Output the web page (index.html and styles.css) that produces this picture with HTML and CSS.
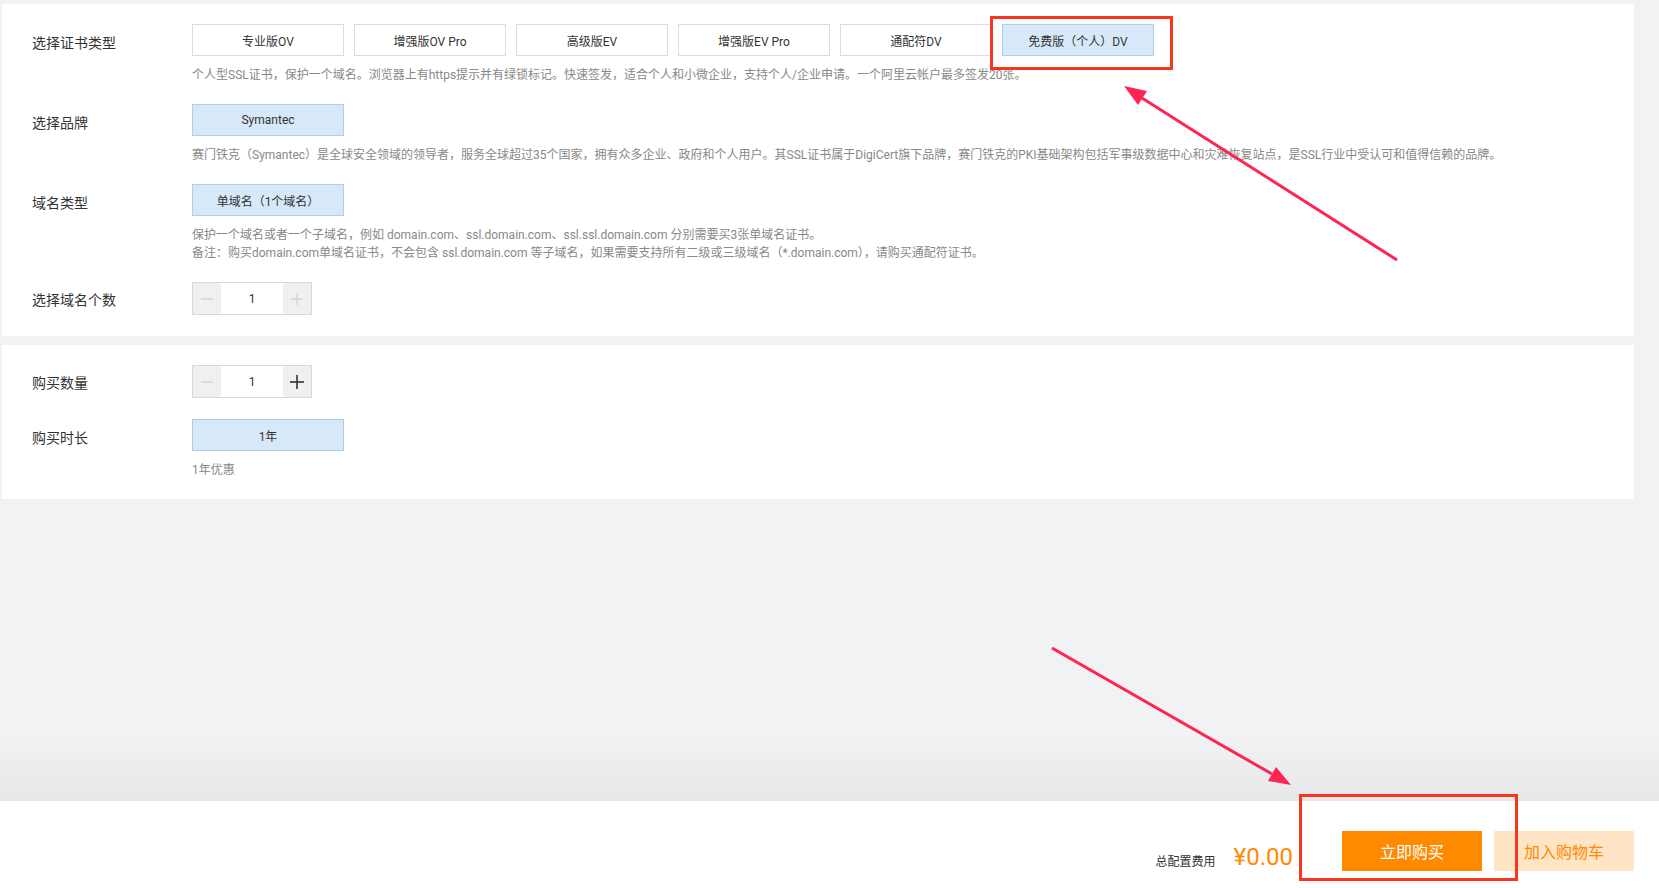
FILE: index.html
```html
<!DOCTYPE html>
<html lang="zh-CN">
<head>
<meta charset="utf-8">
<title>SSL证书购买</title>
<link rel="stylesheet" href="styles.css">
</head>
<body>
<div class="app">
  <main class="content">
    <section class="panel">
      <div class="row">
        <div class="label">选择证书类型</div>
        <div class="field">
          <div class="opts">
            <span class="opt">专业版OV</span>
            <span class="opt">增强版OV Pro</span>
            <span class="opt">高级版EV</span>
            <span class="opt">增强版EV Pro</span>
            <span class="opt">通配符DV</span>
            <span class="opt selected">免费版（个人）DV</span>
          </div>
          <p class="desc">个人型SSL证书，保护一个域名。浏览器上有https提示并有绿锁标记。快速签发，适合个人和小微企业，支持个人/企业申请。一个阿里云帐户最多签发20张。</p>
        </div>
      </div>
      <div class="row">
        <div class="label">选择品牌</div>
        <div class="field">
          <div class="opts"><span class="opt selected">Symantec</span></div>
          <p class="desc">赛门铁克（Symantec）是全球安全领域的领导者，服务全球超过35个国家，拥有众多企业、政府和个人用户。其SSL证书属于DigiCert旗下品牌，赛门铁克的PKI基础架构包括军事级数据中心和灾难恢复站点，是SSL行业中受认可和值得信赖的品牌。</p>
        </div>
      </div>
      <div class="row">
        <div class="label">域名类型</div>
        <div class="field">
          <div class="opts"><span class="opt selected">单域名（1个域名）</span></div>
          <p class="desc">保护一个域名或者一个子域名，例如 domain.com、ssl.domain.com、ssl.ssl.domain.com 分别需要买3张单域名证书。<br>备注：购买domain.com单域名证书，不会包含 ssl.domain.com 等子域名，如果需要支持所有二级或三级域名（*.domain.com），请购买通配符证书。</p>
        </div>
      </div>
      <div class="row">
        <div class="label label-step">选择域名个数</div>
        <div class="field">
          <div class="stepper">
            <span class="step-btn"><svg width="14" height="14" viewBox="0 0 14 14"><line x1="1" y1="7" x2="13" y2="7" class="ic-off"/></svg></span>
            <span class="step-val">1</span>
            <span class="step-btn"><svg width="14" height="14" viewBox="0 0 14 14"><line x1="1" y1="7" x2="13" y2="7" class="ic-off"/><line x1="7" y1="1" x2="7" y2="13" class="ic-off"/></svg></span>
          </div>
        </div>
      </div>
    </section>

    <section class="panel panel-buy">
      <div class="row">
        <div class="label label-step">购买数量</div>
        <div class="field">
          <div class="stepper">
            <span class="step-btn"><svg width="14" height="14" viewBox="0 0 14 14"><line x1="1" y1="7" x2="13" y2="7" class="ic-off"/></svg></span>
            <span class="step-val">1</span>
            <span class="step-btn"><svg width="16" height="16" viewBox="0 0 16 16"><line x1="1" y1="8" x2="15" y2="8" class="ic-on"/><line x1="8" y1="1" x2="8" y2="15" class="ic-on"/></svg></span>
          </div>
        </div>
      </div>
      <div class="row">
        <div class="label">购买时长</div>
        <div class="field">
          <div class="opts"><span class="opt selected">1年</span></div>
          <p class="desc desc-tight">1年优惠</p>
        </div>
      </div>
    </section>
  </main>

  <footer class="footer">
    <span class="total-label">总配置费用</span>
    <span class="price">¥0.00</span>
    <button class="btn btn-buy">立即购买</button>
    <button class="btn btn-cart">加入购物车</button>
  </footer>

  <svg class="annot" width="1659" height="888" viewBox="0 0 1659 888">
    <rect x="991.5" y="17.5" width="180" height="51" class="box"/>
    <rect x="1300.5" y="795.5" width="216" height="84" class="box"/>
    <line x1="1397" y1="260" x2="1142" y2="98" class="arrow-line"/>
    <polygon points="1124,86 1147,91 1138,105" class="arrow-head"/>
    <line x1="1052" y1="648" x2="1272" y2="774" class="arrow-line"/>
    <polygon points="1291,785 1268,781 1276,767" class="arrow-head"/>
  </svg>
</div>
</body>
</html>
```

FILE: styles.css
```css
* { box-sizing: border-box; }

html, body {
  margin: 0;
  padding: 0;
}

body {
  font-family: Roboto, "Noto Sans CJK SC", "Liberation Sans", sans-serif;
  color: #333;
  background: #f1f2f4;
}

.app {
  position: relative;
  height: 100vh;
  display: flex;
  flex-direction: column;
  overflow: hidden;
}

.content {
  flex: 1;
  padding: 4px 25px 0 2px;
  background: linear-gradient(to bottom, #f1f2f4 0, #f1f2f4 calc(100% - 64px), #e6e7e9 100%);
}

.panel {
  background: #fff;
  padding: 20px 30px 21px;
  display: flex;
  flex-direction: column;
  gap: 20px;
}

.panel-buy {
  margin-top: 9px;
  gap: 21px;
  padding-bottom: 20px;
}

.row {
  display: flex;
  align-items: flex-start;
}

.label {
  width: 160px;
  flex: none;
  font-size: 14px;
  line-height: 32px;
  padding-top: 3px;
  color: #333;
}

.label-step {
  line-height: 30px;
  padding-top: 3px;
}

.field {
  flex: 1;
  min-width: 0;
}

.opts {
  display: flex;
  gap: 10px;
}

.opt {
  width: 152px;
  height: 32px;
  border: 1px solid #dcdcdc;
  background: #fff;
  font-size: 12px;
  color: #333;
  display: flex;
  align-items: center;
  justify-content: center;
}

.opt.selected {
  background: #d7e9f8;
  border-color: #a9cfef;
}

.desc {
  margin: 10px 0 0;
  font-size: 12px;
  line-height: 18px;
  color: #888;
  white-space: nowrap;
}

.desc-tight {
  margin-top: 10px;
}

.stepper {
  display: flex;
  width: 120px;
  height: 33px;
  border: 1px solid #d9d9d9;
}

.step-btn {
  width: 28px;
  background: #f0f0f0;
  display: flex;
  align-items: center;
  justify-content: center;
}

.step-val {
  flex: 1;
  background: #fff;
  display: flex;
  align-items: center;
  justify-content: center;
  font-size: 12px;
  color: #333;
}

.ic-off {
  stroke: #cfcfcf;
  stroke-width: 1.2;
}

.ic-on {
  stroke: #333;
  stroke-width: 1.6;
}

.footer {
  height: 87px;
  flex: none;
  background: #fff;
  display: flex;
  justify-content: flex-end;
  align-items: flex-end;
  padding: 0 25px 17px 0;
}

.total-label {
  font-size: 12px;
  line-height: 18px;
  color: #333;
  margin-right: 18px;
}

.price {
  font-size: 24px;
  line-height: 30px;
  color: #ff8a00;
  margin-right: 49px;
  margin-bottom: -1px;
}

.btn {
  width: 140px;
  height: 40px;
  border: none;
  font-family: inherit;
  font-size: 16px;
  cursor: pointer;
}

.btn-buy {
  background: #ff8a00;
  color: #fff;
}

.btn-cart {
  margin-left: 12px;
  background: #ffe4c6;
  color: #ff8a00;
}

.annot {
  position: absolute;
  left: 0;
  top: 0;
  pointer-events: none;
}

.box {
  fill: none;
  stroke: #f8361f;
  stroke-width: 3;
}

.arrow-line {
  stroke: #ff2553;
  stroke-width: 3;
}

.arrow-head {
  fill: #ff2553;
}
```
